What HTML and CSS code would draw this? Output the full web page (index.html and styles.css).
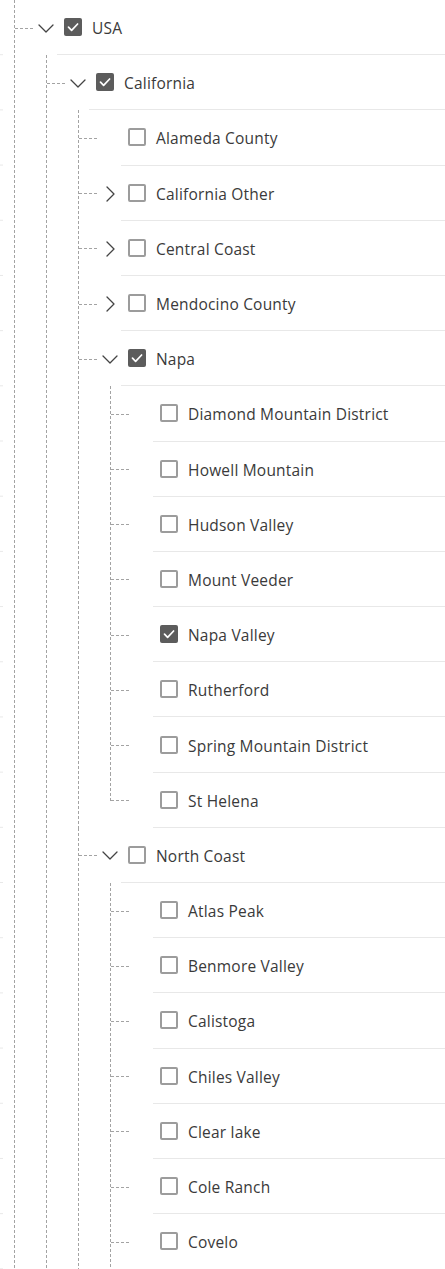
FILE: index.html
```html
<!DOCTYPE html>
<html lang="en">
<head>
<meta charset="utf-8">
<title>Region tree</title>
<link rel="stylesheet" href="styles.css">
</head>
<body>
<ul class="tree">
  <li class="node">
    <div class="row">
      <span class="hline"></span>
      <span class="toggle"><svg class="chev-down" viewBox="0 0 16 9"><path d="M1 1 L8 8 L15 1"/></svg></span>
      <div class="content"><span class="box checked"><svg viewBox="0 0 18 18"><path d="M4.5 9.2 L7.6 12.3 L13.6 6"/></svg></span><span class="label">USA</span></div>
    </div>
    <ul class="children">
      <li class="node">
        <div class="row">
          <span class="hline"></span>
          <span class="toggle"><svg class="chev-down" viewBox="0 0 16 9"><path d="M1 1 L8 8 L15 1"/></svg></span>
          <div class="content"><span class="box checked"><svg viewBox="0 0 18 18"><path d="M4.5 9.2 L7.6 12.3 L13.6 6"/></svg></span><span class="label">California</span></div>
        </div>
        <ul class="children">
          <li class="node">
            <div class="row">
              <span class="hline"></span>
              <span class="toggle"></span>
              <div class="content"><span class="box"></span><span class="label">Alameda County</span></div>
            </div>
          </li>
          <li class="node">
            <div class="row">
              <span class="hline"></span>
              <span class="toggle"><svg class="chev-right" viewBox="0 0 9 16"><path d="M1 1 L8 8 L1 15"/></svg></span>
              <div class="content"><span class="box"></span><span class="label">California Other</span></div>
            </div>
          </li>
          <li class="node">
            <div class="row">
              <span class="hline"></span>
              <span class="toggle"><svg class="chev-right" viewBox="0 0 9 16"><path d="M1 1 L8 8 L1 15"/></svg></span>
              <div class="content"><span class="box"></span><span class="label">Central Coast</span></div>
            </div>
          </li>
          <li class="node">
            <div class="row">
              <span class="hline"></span>
              <span class="toggle"><svg class="chev-right" viewBox="0 0 9 16"><path d="M1 1 L8 8 L1 15"/></svg></span>
              <div class="content"><span class="box"></span><span class="label">Mendocino County</span></div>
            </div>
          </li>
          <li class="node">
            <div class="row">
              <span class="hline"></span>
              <span class="toggle"><svg class="chev-down" viewBox="0 0 16 9"><path d="M1 1 L8 8 L15 1"/></svg></span>
              <div class="content"><span class="box checked"><svg viewBox="0 0 18 18"><path d="M4.5 9.2 L7.6 12.3 L13.6 6"/></svg></span><span class="label">Napa</span></div>
            </div>
            <ul class="children">
              <li class="node"><div class="row"><span class="hline"></span><span class="toggle"></span><div class="content"><span class="box"></span><span class="label">Diamond Mountain District</span></div></div></li>
              <li class="node"><div class="row"><span class="hline"></span><span class="toggle"></span><div class="content"><span class="box"></span><span class="label">Howell Mountain</span></div></div></li>
              <li class="node"><div class="row"><span class="hline"></span><span class="toggle"></span><div class="content"><span class="box"></span><span class="label">Hudson Valley</span></div></div></li>
              <li class="node"><div class="row"><span class="hline"></span><span class="toggle"></span><div class="content"><span class="box"></span><span class="label">Mount Veeder</span></div></div></li>
              <li class="node"><div class="row"><span class="hline"></span><span class="toggle"></span><div class="content"><span class="box checked"><svg viewBox="0 0 18 18"><path d="M4.5 9.2 L7.6 12.3 L13.6 6"/></svg></span><span class="label">Napa Valley</span></div></div></li>
              <li class="node"><div class="row"><span class="hline"></span><span class="toggle"></span><div class="content"><span class="box"></span><span class="label">Rutherford</span></div></div></li>
              <li class="node"><div class="row"><span class="hline"></span><span class="toggle"></span><div class="content"><span class="box"></span><span class="label">Spring Mountain District</span></div></div></li>
              <li class="node last"><div class="row"><span class="hline"></span><span class="toggle"></span><div class="content"><span class="box"></span><span class="label">St Helena</span></div></div></li>
            </ul>
          </li>
          <li class="node">
            <div class="row">
              <span class="hline"></span>
              <span class="toggle"><svg class="chev-down" viewBox="0 0 16 9"><path d="M1 1 L8 8 L15 1"/></svg></span>
              <div class="content"><span class="box"></span><span class="label">North Coast</span></div>
            </div>
            <ul class="children">
              <li class="node"><div class="row"><span class="hline"></span><span class="toggle"></span><div class="content"><span class="box"></span><span class="label">Atlas Peak</span></div></div></li>
              <li class="node"><div class="row"><span class="hline"></span><span class="toggle"></span><div class="content"><span class="box"></span><span class="label">Benmore Valley</span></div></div></li>
              <li class="node"><div class="row"><span class="hline"></span><span class="toggle"></span><div class="content"><span class="box"></span><span class="label">Calistoga</span></div></div></li>
              <li class="node"><div class="row"><span class="hline"></span><span class="toggle"></span><div class="content"><span class="box"></span><span class="label">Chiles Valley</span></div></div></li>
              <li class="node"><div class="row"><span class="hline"></span><span class="toggle"></span><div class="content"><span class="box"></span><span class="label">Clear lake</span></div></div></li>
              <li class="node"><div class="row"><span class="hline"></span><span class="toggle"></span><div class="content"><span class="box"></span><span class="label">Cole Ranch</span></div></div></li>
              <li class="node"><div class="row"><span class="hline"></span><span class="toggle"></span><div class="content open-end"><span class="box"></span><span class="label">Covelo</span></div></div></li>
            </ul>
          </li>
        </ul>
      </li>
    </ul>
  </li>
</ul>
</body>
</html>
```

FILE: styles.css
```css
html, body {
  margin: 0;
  padding: 0;
  background: #ffffff;
}

body {
  width: 445px;
  height: 1269px;
  overflow: hidden;
  font-family: "Open Sans", "Noto Sans", sans-serif;
  font-size: 15.5px;
  letter-spacing: 0.2px;
  color: #3a3a3a;
}

.tree {
  list-style: none;
  margin: 0;
  padding: 0;
  background-image: linear-gradient(to bottom, transparent 54.2px, #e8e8e8 54.2px, #e8e8e8 55.2px);
  background-size: 3px 55.2px;
  background-repeat: repeat-y;
  background-position: 0 0;
}

.children {
  list-style: none;
  margin: 0;
  padding: 0 0 0 32px;
}

.node {
  position: relative;
}

.node::before {
  content: "";
  position: absolute;
  left: 14px;
  top: 0;
  bottom: 0;
  width: 1px;
  background-image: repeating-linear-gradient(to bottom, #a3a3a3 0, #a3a3a3 3px, transparent 3px, transparent 5px);
}

.node.last::before {
  bottom: auto;
  height: 28px;
}

.row {
  display: flex;
  align-items: stretch;
  height: 55.2px;
  padding-left: 15px;
}

.hline {
  flex: 0 0 20px;
  align-self: center;
  height: 1px;
  margin-top: 1px;
  background-image: repeating-linear-gradient(to right, #a3a3a3 0, #a3a3a3 3px, transparent 3px, transparent 5px);
}

.toggle {
  flex: 0 0 22px;
  display: flex;
  align-items: center;
  justify-content: center;
  margin-top: 1px;
}

.chev-down {
  width: 16px;
  height: 9px;
}

.chev-right {
  width: 9px;
  height: 16px;
}

.toggle svg path {
  fill: none;
  stroke: #444444;
  stroke-width: 1.3;
  stroke-linecap: round;
  stroke-linejoin: round;
}

.content {
  flex: 1 1 auto;
  display: flex;
  align-items: center;
  gap: 10px;
  padding-left: 7px;
  border-bottom: 1px solid #e8e8e8;
  box-sizing: border-box;
}

.content.open-end {
  border-bottom-color: transparent;
}

.box {
  flex: 0 0 18px;
  width: 18px;
  height: 18px;
  box-sizing: border-box;
  border: 2px solid #9c9c9c;
  border-radius: 2px;
  background: #ffffff;
  display: flex;
}

.box.checked {
  border: none;
  background: #5c5c5c;
}

.box svg {
  width: 18px;
  height: 18px;
}

.box svg path {
  fill: none;
  stroke: #ffffff;
  stroke-width: 1.7;
  stroke-linecap: round;
  stroke-linejoin: round;
}

.label {
  white-space: nowrap;
  line-height: 20px;
  padding-top: 2px;
}
```
